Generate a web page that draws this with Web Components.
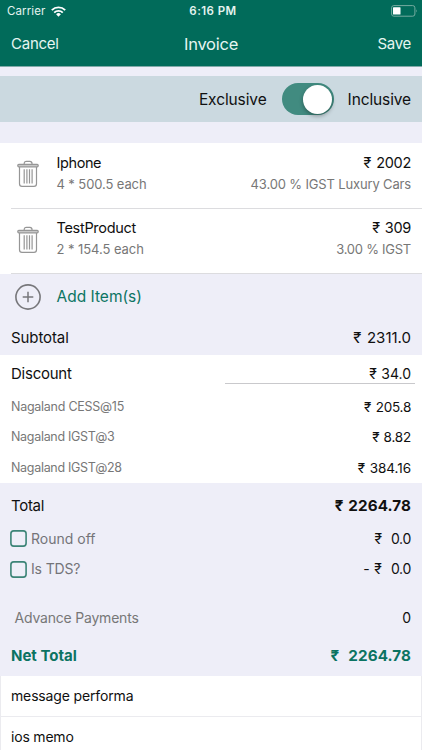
<!DOCTYPE html>
<html lang="en">
<head>
<meta charset="utf-8">
<title>Invoice</title>
<style>
html,body{margin:0;padding:0}
body{width:422px;height:750px;overflow:hidden;background:#eeeef8;font-family:Inter,"Noto Sans","Liberation Sans",sans-serif;color:#101010;-webkit-font-smoothing:antialiased}
</style>
</head>
<body>
<invoice-screen></invoice-screen>
<script>
const define = (name, html, setup) => customElements.define(name, class extends HTMLElement {
  connectedCallback() {
    if (this.shadowRoot) return;
    const t = document.createElement('template');
    t.innerHTML = html;
    this.attachShadow({mode: 'open'}).append(t.content.cloneNode(true));
    if (setup) setup(this);
  }
});

// Single-line label: s = font size, l = letter spacing, w = word spacing
define('ui-text', `<style>:host{display:block;white-space:pre;line-height:20px}</style><slot></slot>`, el => {
  el.style.fontSize = el.getAttribute('s') + 'px';
  el.style.letterSpacing = (el.getAttribute('l') || 0) + 'px';
  el.style.wordSpacing = (el.getAttribute('w') || 0) + 'px';
});

define('status-bar', `<style>
:host{display:grid;grid-template-columns:1fr auto 1fr;align-items:center;height:22px;padding:0 5px 0 7px;box-sizing:border-box;color:#e4f3ef}
.l{display:flex;align-items:center;gap:6px}
.r{justify-self:end;display:block}
.time{font-weight:600}
svg{display:block}
</style>
<div class="l"><ui-text s="11.5" l="0.1">Carrier</ui-text>
<svg width="15" height="11" viewBox="0 0 15 11" fill="none" stroke="#fff" stroke-width="1.9"><path d="M.8 4.1A9.6 9.6 0 0 1 14.2 4.1M3.2 6.6A6.2 6.2 0 0 1 11.8 6.6"/><path d="M5.1 8.2A3.5 3.5 0 0 1 9.9 8.2L7.5 10.7Z" fill="#fff" stroke="none"/></svg></div>
<ui-text class="time" s="11.5" l="0.45" style="margin-left:2px">6:16 PM</ui-text>
<svg class="r" style="margin-right:-1px" width="27" height="12" viewBox="0 0 27 12"><rect x=".6" y=".6" width="23.3" height="10.6" rx="2.2" fill="none" stroke="#76aca0"/><rect x="2" y="2.2" width="7.5" height="7.4" rx=".6" fill="#fff"/><path d="M25 4.2q1.5 1.6 0 3.4z" fill="#76aca0"/></svg>`);

define('nav-bar', `<style>
:host{display:grid;grid-template-columns:1fr auto 1fr;align-items:center;height:44px;padding:0 11px;box-sizing:border-box;color:#e6f5f1}
</style><slot name="left"></slot><slot name="title"></slot><slot name="right"></slot>`);

define('toggle-switch', `<style>
:host{display:flex;justify-content:flex-end;width:52px;height:32px;border-radius:16px;background:#418b80;padding:1.5px;box-sizing:border-box}
i{width:29px;height:29px;border-radius:50%;background:#fff;box-shadow:0 2px 4px #0005}
</style><i></i>`);

define('tax-mode', `<style>
:host{display:flex;justify-content:flex-end;align-items:center;height:46px;margin-top:9px;background:#cbd9e0;padding-right:11px}
toggle-switch{margin:0 14px 0 15px}
ui-text{padding-top:1px}
</style><ui-text s="15.5" l="-.1">Exclusive</ui-text><toggle-switch></toggle-switch><ui-text s="15.5" l="-.12">Inclusive</ui-text>`);

define('trash-icon', `<style>:host{display:block}svg{display:block}</style>
<svg width="22" height="28" viewBox="0 0 22 28" fill="none" stroke="#969696" stroke-width="1.2"><path d="M7.2 4.2V3.5Q7.2 1.3 9.4 1.3H12.8Q15 1.3 15 3.5V4.2"/><rect x=".8" y="4.3" width="20.4" height="2.5" rx="1" fill="#c8c8c8"/><path d="M2.5 7V23.7Q2.5 26.4 5 26.4H17Q19.5 26.4 19.5 23.7V7M7.2 9.3V23.4M9.9 9.3V23.4M12.5 9.3V23.4M15.1 9.3V23.4"/></svg>`);

define('line-item', `<style>
:host{display:flex;height:65.3px;background:#fff;box-sizing:border-box}
trash-icon{margin:17px 0 0 17px;width:22px}
.b{flex:1;display:grid;grid-template-columns:auto auto;justify-content:space-between;align-content:start;row-gap:1px;padding:9.5px 11px 0 17.5px}
.g{color:#777}
.rt{text-align:right;display:grid;justify-items:end}
.w{flex:1;display:flex;position:relative}
.w::after{content:"";position:absolute;left:11px;right:0;bottom:0;height:1px;background:#dcdcdf}
</style><div class="w"><trash-icon></trash-icon><div class="b">
<slot name="name"></slot><div class="rt"><slot name="price"></slot></div><div class="g"><slot name="qty"></slot></div><div class="g rt"><slot name="tax"></slot></div></div></div>`);

define('add-item', `<style>
:host{display:flex;align-items:center;height:46px;box-sizing:border-box;padding-left:15px;gap:15.5px;color:#0c7563}
svg{display:block}
slot{display:block;padding-top:1px}</style>
<svg width="26" height="26" viewBox="0 0 26 26" fill="none" stroke="#77777b"><circle cx="13" cy="13" r="12.1" stroke-width="1.6"/><path d="M7.7 13H18.3M13 7.7V18.3" stroke-width="1.5"/></svg><slot></slot>`);

define('amount-row', `<style>
:host{display:flex;align-items:center;justify-content:space-between;padding:0 11px;box-sizing:border-box;height:var(--h,30.5px)}
</style><slot></slot>`);

define('check-box', `<style>
:host{display:flex;align-items:center;gap:4px;color:#747478;margin-left:-1px}
svg{display:block}
</style><svg width="17" height="17" viewBox="0 0 17 17"><rect x=".9" y=".9" width="15.2" height="15.2" rx="2.8" fill="none" stroke="#3c8477" stroke-width="1.6"/></svg><slot></slot>`);

define('memo-row', `<style>
:host{display:flex;align-items:center;height:41px;background:#fff;border:solid #ebebef;border-width:0 1px 1px;padding:0 10px;box-sizing:border-box}
</style><slot></slot>`);

define('invoice-screen', `<style>
:host{display:flex;flex-direction:column;width:422px;height:750px;overflow:hidden}
:host>*{flex-shrink:0}
header{background:#016b5a;border-bottom:1px solid #81aaa9}
.items{margin-top:21.4px}
.white{background:#fff}
.gray{color:#777}
.field{align-self:stretch;width:190px;box-sizing:border-box;display:flex;align-items:center;justify-content:flex-end;padding-right:4px;margin-right:-4px;position:relative}
.field::after{content:"";position:absolute;left:0;right:0;bottom:7px;height:1px;background:#c9c9cc}
.bold{font-weight:700}
.net{color:#0b7362}
</style>
<header><status-bar></status-bar>
<nav-bar><ui-text slot="left" s="15" l="-.25">Cancel</ui-text><ui-text slot="title" s="16.5" l="-.25">Invoice</ui-text><ui-text slot="right" style="justify-self:end" s="15" l="-.3">Save</ui-text></nav-bar></header>
<tax-mode></tax-mode>
<div class="items">
<line-item><ui-text slot="name" s="14.5" l="-.4">Iphone</ui-text><ui-text slot="price" s="14.5" l="-.3" w="1.5">₹ 2002</ui-text><ui-text slot="qty" s="13" l="-.1">4 * 500.5 each</ui-text><ui-text slot="tax" s="13" l="-.15">43.00 % IGST Luxury Cars</ui-text></line-item>
<line-item><ui-text slot="name" s="14.5" l="-.3">TestProduct</ui-text><ui-text slot="price" s="14.5" l="-.3" w="1.3">₹ 309</ui-text><ui-text slot="qty" s="13" l="-.06">2 * 154.5 each</ui-text><ui-text slot="tax" s="13" l="-.25">3.00 % IGST</ui-text></line-item>
</div>
<add-item><ui-text s="15.5">Add Item(s)</ui-text></add-item>
<amount-row style="--h:35.5px"><ui-text s="15" l="-.1">Subtotal</ui-text><ui-text s="15" w="1.4">₹ 2311.0</ui-text></amount-row>
<div class="white">
<amount-row style="--h:36px;padding-top:1px"><ui-text s="15" l="-.25">Discount</ui-text><div class="field"><ui-text s="14" w=".6">₹ 34.0</ui-text></div></amount-row>
<amount-row><ui-text class="gray" s="12.5" l="-.26">Nagaland CESS@15</ui-text><ui-text s="13.5" l="-.25" w="1">₹ 205.8</ui-text></amount-row>
<amount-row><ui-text class="gray" s="12.5" l="-.3">Nagaland IGST@3</ui-text><ui-text s="13.5" l="-.2" w=".6">₹ 8.82</ui-text></amount-row>
<amount-row><ui-text class="gray" s="12.5" l="-.3">Nagaland IGST@28</ui-text><ui-text s="13.5" l="-.05" w="1">₹ 384.16</ui-text></amount-row>
</div>
<amount-row style="--h:46px"><ui-text s="15" l="-.3">Total</ui-text><ui-text class="bold" s="15.2" l=".1" w="1.2">₹ 2264.78</ui-text></amount-row>
<amount-row style="margin-top:-5.5px"><check-box><ui-text s="14">Round off</ui-text></check-box><ui-text s="14" l="-.3" w=".9">₹  0.0</ui-text></amount-row>
<amount-row><check-box><ui-text s="14" l="-.15">Is TDS?</ui-text></check-box><ui-text s="14" l="-.3" w="1.1">- ₹  0.0</ui-text></amount-row>
<amount-row style="--h:40px;margin-top:13.5px"><ui-text class="gray" style="margin-left:3.5px" s="14" l="-.2">Advance Payments</ui-text><ui-text s="14">0</ui-text></amount-row>
<amount-row class="net" style="--h:38px;padding-bottom:2px"><ui-text class="bold" s="15">Net Total</ui-text><ui-text class="bold" s="15.2" l=".1" w=".8">₹  2264.78</ui-text></amount-row>
<memo-row><ui-text s="14" l="-.15">message performa</ui-text></memo-row>
<memo-row><ui-text s="14" l="-.2">ios memo</ui-text></memo-row>
`);
</script>
</body>
</html>
